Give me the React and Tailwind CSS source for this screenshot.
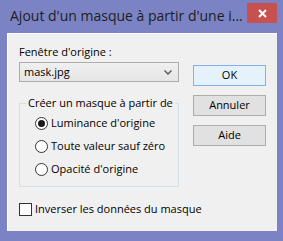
import React from 'react';

const font = { fontFamily: '"Open Sans", "Noto Sans", sans-serif' };

function Radio({ checked, label }) {
    return (
        <div className="flex h-[23px] items-center">
            <span className="flex h-[13px] w-[13px] items-center justify-center rounded-full border border-[#333] bg-white">
                {checked && <span className="h-[7px] w-[7px] rounded-full bg-[#1a1a1a]" />}
            </span>
            <span className="ml-[3px] text-[11px] text-black">{label}</span>
        </div>
    );
}

function Button({ children, primary }) {
    return (
        <div
            className={`flex h-[21px] w-[73px] items-center justify-center border text-[11px] text-black ${primary
                ? 'border-[#7eb4ea] bg-[#e5f1fb]'
                : 'border-[#adadad] bg-[#e1e1e1]'
                }`}
        >
            {children}
        </div>
    );
}

export default function App() {
    return (
        <div className="h-[241px] w-[283px] bg-[#7b83c4]" style={font}>
            <div className="flex h-[33px] items-start">
                <div className="ml-[10px] mt-[6px] text-[14px] leading-[20px] text-[#1e1e1e]">
                    Ajout d'un masque à partir d'une i...
                </div>
                <div className="ml-auto mr-[6px] mt-[3px] flex h-[20px] w-[30px] items-center justify-center bg-[#c75050]">
                    <svg width="9" height="9" viewBox="0 0 9 9">
                        <path d="M1 1 L8 8 M8 1 L1 8" stroke="#fff" strokeWidth="2" />
                    </svg>
                </div>
            </div>
            <div className="mx-[7px] mr-[6px] h-[198px] border-t border-l border-white bg-[#f0f0f0] px-[11px]">
                <div className="flex">
                    <div className="w-[161px]">
                        <div className="mt-[10px] h-[16px] text-[11px] leading-[16px] text-black">
                            Fenêtre d'origine :
                        </div>
                        <div className="mt-[2px] flex h-[20px] items-center border border-[#acacac] bg-gradient-to-b from-[#f0f0f0] to-[#e5e5e5] pl-[4px] pr-[6px] text-[11px] text-black">
                            <span>mask.jpg</span>
                            <svg className="ml-auto" width="8" height="5" viewBox="0 0 8 5">
                                <path d="M0.5 0.5 L4 4 L7.5 0.5" fill="none" stroke="#555" strokeWidth="1.4" />
                            </svg>
                        </div>
                        <fieldset className="mt-[13px] h-[92px] border border-[#d5dfe5] px-0">
                            <legend className="ml-[6px] px-[2px] text-[11px] leading-[16px] text-black">
                                Créer un masque à partir de
                            </legend>
                            <div className="ml-[15px] mt-[1px] flex flex-col">
                                <Radio checked label="Luminance d'origine" />
                                <Radio label="Toute valeur sauf zéro" />
                                <Radio label="Opacité d'origine" />
                            </div>
                        </fieldset>
                    </div>
                    <div className="ml-[14px] mt-[31px] flex flex-col gap-[9px]">
                        <Button primary>OK</Button>
                        <Button>Annuler</Button>
                        <Button>Aide</Button>
                    </div>
                </div>
                <div className="mt-[14px] flex items-center">
                    <span className="h-[13px] w-[13px] border border-[#333] bg-white" />
                    <span className="ml-[3px] text-[11px] text-black">Inverser les données du masque</span>
                </div>
            </div>
        </div>
    );
}
